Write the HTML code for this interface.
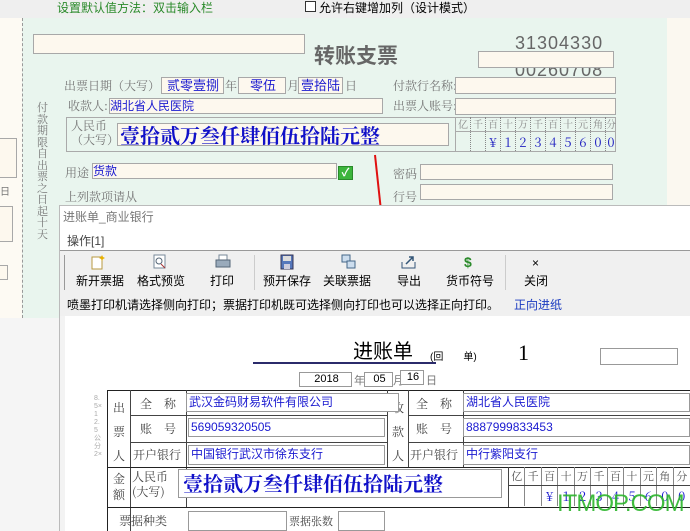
<!DOCTYPE html>
<html><head><meta charset="utf-8"><style>
*{margin:0;padding:0;box-sizing:border-box}
body{width:690px;height:531px;overflow:hidden;position:relative;background:#fff;font-family:"Liberation Sans","Noto Sans CJK SC",sans-serif;font-size:12px;color:#000}
.a{position:absolute;white-space:nowrap}
.bx{position:absolute;background:#fdf8ee;border:1px solid #a8a8a8}
.lb{position:absolute;white-space:nowrap;color:#777;font-family:"Noto Serif CJK SC",serif;font-size:12px;line-height:16px}
.bl{color:#1a1ad0}
.in{position:absolute;background:#fff;border:1px solid #999;font-size:12px;padding-left:2px;line-height:18px}
.g span{text-align:center;border-right:1px solid #888;display:block}
</style></head><body>
<div class="a" style="left:0;top:0;width:690px;height:18px;background:#efefef"></div>
<div class="a" style="left:57px;top:-1px;color:#2a8a2a;font-size:12px">设置默认值方法：双击输入栏</div>
<div class="a" style="left:305px;top:1px;width:11px;height:11px;border:1px solid #333;background:#fff"></div>
<div class="a" style="left:319px;top:-1px;font-size:12px">允许右键增加列（设计模式）</div>
<div class="a" style="left:0;top:18px;width:22px;height:300px;background:#fdfaf3"></div>
<div class="bx" style="left:-2px;top:138px;width:19px;height:40px"></div>
<div class="a" style="left:0;top:183px;color:#777;font-size:10px">日</div>
<div class="bx" style="left:-2px;top:206px;width:15px;height:36px"></div>
<div class="bx" style="left:-2px;top:265px;width:10px;height:15px"></div>
<div class="a" style="left:22px;top:18px;width:645px;height:300px;background:#e9f5ee;border-left:1px dashed #999"></div>
<div class="a" style="left:667px;top:18px;width:23px;height:190px;background:#fbf8f0"></div>
<div class="bx" style="left:33px;top:34px;width:272px;height:20px"></div>
<div class="a" style="left:314px;top:42px;font-size:21px;line-height:26px;color:#666;font-family:'Noto Sans CJK SC',sans-serif;font-weight:bold">转账支票</div>
<div class="a" style="left:515px;top:33px;font-size:18px;color:#666;letter-spacing:1px">31304330</div>
<div class="a" style="left:515px;top:60px;font-size:18px;color:#666;letter-spacing:1px">00260708</div>
<div class="bx" style="left:478px;top:51px;width:136px;height:17px"></div>
<div class="lb" style="left:64px;top:78px">出票日期（大写）</div>
<div class="bx bl" style="left:161px;top:77px;width:63px;height:17px;font-size:13px;padding-left:5px;line-height:15px">贰零壹捌</div>
<div class="lb" style="left:225px;top:78px">年</div>
<div class="bx bl" style="left:238px;top:77px;width:48px;height:17px;font-size:13px;padding-left:11px;line-height:15px">零伍</div>
<div class="lb" style="left:287px;top:78px">月</div>
<div class="bx bl" style="left:298px;top:77px;width:45px;height:17px;font-size:13px;padding-left:2px;line-height:15px">壹拾陆</div>
<div class="lb" style="left:345px;top:78px">日</div>
<div class="lb" style="left:393px;top:78px">付款行名称:</div>
<div class="bx" style="left:455px;top:77px;width:161px;height:17px"></div>
<div class="lb" style="left:68px;top:98px">收款人:</div>
<div class="bx bl" style="left:109px;top:98px;width:274px;height:16px;font-size:12px;line-height:14px">湖北省人民医院</div>
<div class="lb" style="left:393px;top:98px">出票人账号:</div>
<div class="bx" style="left:455px;top:98px;width:161px;height:17px"></div>
<div class="lb" style="left:37px;top:102px;width:12px;white-space:normal;line-height:11.5px;font-size:11px">付款期限自出票之日起十天</div>
<div class="a" style="left:66px;top:117px;width:550px;height:35px;border:1px solid #aaa"></div>
<div class="lb" style="left:71px;top:119px;font-size:12px;line-height:14px">人民币<br>（大写）</div>
<div class="bx" style="left:117px;top:123px;width:332px;height:23px;color:#1010c8;font-size:20px;font-weight:bold;font-family:'Noto Serif CJK SC',serif;line-height:21px;padding-left:2px;overflow:hidden">壹拾贰万叁仟肆佰伍拾陆元整</div>
<div class="a" style="left:455px;top:117px;width:161px;height:35px;border-left:1px solid #aaa;">
<div class="g" style="display:flex;height:15px;border-bottom:1px solid #aaa;color:#888;font-family:'Noto Serif CJK SC',serif;font-size:10px;line-height:14px">
<span style="width:15px;border-right-style:dotted">亿</span><span style="width:15px;border-right-style:dotted">千</span><span style="width:15px;border-right-style:dotted">百</span><span style="width:15px;border-right-style:dotted">十</span><span style="width:15px;border-right-style:dotted">万</span><span style="width:15px;border-right-style:dotted">千</span><span style="width:15px;border-right-style:dotted">百</span><span style="width:15px;border-right-style:dotted">十</span><span style="width:15px;border-right-style:dotted">元</span><span style="width:15px;border-right-style:dotted">角</span><span style="width:10px;border:none">分</span></div>
<div class="g" style="display:flex;height:19px;color:#2020c0;font-family:'Noto Serif CJK SC',serif;font-size:13px;line-height:19px">
<span style="width:15px;border-right-style:dotted"></span><span style="width:15px;border-right-style:dotted"></span><span style="width:15px;border-right-style:dotted">¥</span><span style="width:15px;border-right-style:dotted">1</span><span style="width:15px;border-right-style:dotted">2</span><span style="width:15px;border-right-style:dotted">3</span><span style="width:15px;border-right-style:dotted">4</span><span style="width:15px;border-right-style:dotted">5</span><span style="width:15px;border-right-style:dotted">6</span><span style="width:15px;border-right-style:dotted">0</span><span style="width:10px;border:none">0</span></div>
</div>
<div class="lb" style="left:65px;top:165px">用途</div>
<div class="bx bl" style="left:92px;top:163px;width:245px;height:16px;line-height:14px">货款</div>
<div class="a" style="left:338px;top:166px;width:15px;height:14px;background:#3cb53c;border:1px solid #2a8a2a;color:#fff;font-size:11px;line-height:12px;text-align:center;font-weight:bold">✓</div>
<div class="lb" style="left:393px;top:166px">密码</div>
<div class="bx" style="left:420px;top:164px;width:193px;height:16px"></div>
<div class="lb" style="left:65px;top:189px">上列款项请从</div>
<div class="lb" style="left:393px;top:189px">行号</div>
<div class="bx" style="left:420px;top:184px;width:193px;height:16px"></div>
<div class="a" style="left:0;top:318px;width:60px;height:213px;background:#f5f5f5"></div>
<svg class="a" style="left:370px;top:150px" width="30" height="95"><line x1="5" y1="5" x2="12" y2="70" stroke="#e01010" stroke-width="2"/><polygon points="7,68 18,67 14,88" fill="#e01010"/></svg>
<div class="a" style="left:59px;top:205px;width:631px;height:326px;background:#fff;border-left:1px solid #bbb;border-top:1px solid #bbb"></div>
<div class="a" style="left:63px;top:208px;color:#777;font-size:12px">进账单_商业银行</div>
<div class="a" style="left:67px;top:232px;color:#444;font-size:12px">操作[1]</div>
<div class="a" style="left:60px;top:250px;width:630px;height:43px;background:#f0f0f0;border-top:1px solid #999"></div>
<div class="a" style="left:64px;top:255px;width:1px;height:35px;background:#999"></div>
<div class="a" style="left:254px;top:255px;width:1px;height:35px;background:#ccc"></div>
<div class="a" style="left:505px;top:255px;width:1px;height:35px;background:#ccc"></div>
<div class="a" style="left:76px;top:272px">新开票据</div>
<div class="a" style="left:137px;top:272px">格式预览</div>
<div class="a" style="left:210px;top:272px">打印</div>
<div class="a" style="left:263px;top:272px">预开保存</div>
<div class="a" style="left:323px;top:272px">关联票据</div>
<div class="a" style="left:397px;top:272px">导出</div>
<div class="a" style="left:446px;top:272px">货币符号</div>
<div class="a" style="left:524px;top:272px">关闭</div>
<svg class="a" style="left:90px;top:254px" width="16" height="16"><rect x="2" y="3" width="10" height="12" fill="#fff" stroke="#b89a40"/><path d="M12 1l1 2 2 1-2 1-1 2-1-2-2-1 2-1z" fill="#e8b000"/></svg>
<svg class="a" style="left:152px;top:254px" width="16" height="16"><rect x="2" y="1" width="11" height="13" fill="#fff" stroke="#789"/><circle cx="7" cy="7" r="3" fill="none" stroke="#567"/><line x1="9" y1="10" x2="13" y2="14" stroke="#a33"/></svg>
<svg class="a" style="left:215px;top:254px" width="16" height="16"><rect x="4" y="1" width="8" height="6" fill="#fff" stroke="#789"/><rect x="1" y="6" width="14" height="7" fill="#9ab" stroke="#567"/></svg>
<svg class="a" style="left:279px;top:254px" width="16" height="16"><rect x="2" y="1" width="12" height="14" fill="#5577bb" stroke="#335"/><rect x="4" y="2" width="8" height="5" fill="#ddd"/><rect x="5" y="10" width="6" height="5" fill="#ccd"/></svg>
<svg class="a" style="left:341px;top:254px" width="16" height="16"><rect x="1" y="1" width="8" height="7" fill="#cde" stroke="#468"/><rect x="6" y="7" width="8" height="7" fill="#cde" stroke="#468"/></svg>
<svg class="a" style="left:401px;top:254px" width="16" height="16"><path d="M1 8v6h13V8" fill="none" stroke="#357"/><path d="M5 10L12 3M8 3h4v4" fill="none" stroke="#357" stroke-width="1.5"/></svg>
<div class="a" style="left:464px;top:254px;color:#2a8a2a;font-weight:bold;font-size:14px;line-height:16px">$</div>
<div class="a" style="left:532px;top:256px;font-size:12px;line-height:14px">×</div>
<div class="a" style="left:60px;top:293px;width:630px;height:23px;background:#f0f0f0"></div>
<div class="a" style="left:67px;top:296px">喷墨打印机请选择侧向打印；票据打印机既可选择侧向打印也可以选择正向打印。</div>
<div class="a" style="left:514px;top:296px;color:#1a3ac0">正向进纸</div>
<div class="a" style="left:60px;top:316px;width:630px;height:215px;background:#fff"></div>
<div class="a" style="left:60px;top:316px;width:5px;height:215px;background:#f3f3f3"></div>
<div class="a" style="left:353px;top:337px;font-size:20px;line-height:26px;font-family:'Noto Sans CJK SC',sans-serif">进账单</div>
<div class="a" style="left:430px;top:348px;font-size:10px">(回　　单)</div>
<div class="a" style="left:253px;top:362px;width:183px;height:2px;background:#2b2b6b"></div>
<div class="a" style="left:518px;top:340px;font-size:22px;font-family:'Liberation Serif',serif">1</div>
<div class="a" style="left:600px;top:348px;width:78px;height:17px;border:1px solid #999"></div>
<div class="in" style="left:299px;top:372px;width:53px;height:15px;line-height:13px;text-align:center;font-size:11px">2018</div>
<div class="a" style="left:354px;top:372px;font-size:11px;color:#777">年</div>
<div class="in" style="left:364px;top:372px;width:29px;height:15px;line-height:13px;text-align:center;font-size:11px">05</div>
<div class="a" style="left:393px;top:372px;font-size:11px;color:#777">月</div>
<div class="in" style="left:400px;top:370px;width:24px;height:15px;line-height:13px;text-align:center;font-size:11px">16</div>
<div class="a" style="left:426px;top:372px;font-size:11px;color:#777">日</div>
<div class="a" style="left:107px;top:390px;width:583px;height:141px;border:1px solid #222;border-right:none;border-bottom:none"></div>
<div class="a" style="left:130px;top:390px;width:1px;height:141px;background:#444"></div>
<div class="a" style="left:186px;top:390px;width:1px;height:117px;background:#444"></div>
<div class="a" style="left:387px;top:390px;width:1px;height:77px;background:#444"></div>
<div class="a" style="left:408px;top:390px;width:1px;height:77px;background:#444"></div>
<div class="a" style="left:463px;top:390px;width:1px;height:77px;background:#444"></div>
<div class="a" style="left:130px;top:415px;width:257px;height:1px;background:#444"></div>
<div class="a" style="left:408px;top:415px;width:282px;height:1px;background:#444"></div>
<div class="a" style="left:130px;top:442px;width:257px;height:1px;background:#444"></div>
<div class="a" style="left:408px;top:442px;width:282px;height:1px;background:#444"></div>
<div class="a" style="left:107px;top:467px;width:583px;height:1px;background:#222"></div>
<div class="a" style="left:107px;top:507px;width:583px;height:1px;background:#222"></div>
<div class="a" style="left:113px;top:396px;font-size:12px;line-height:24px;width:12px;white-space:normal;color:#444;font-family:'Noto Serif CJK SC',serif">出票人</div>
<div class="a" style="left:392px;top:396px;font-size:12px;line-height:24px;width:12px;white-space:normal;color:#444;font-family:'Noto Serif CJK SC',serif">收款人</div>
<div class="a" style="left:140px;top:395px;color:#444;font-family:'Noto Serif CJK SC',serif">全　称</div>
<div class="a" style="left:140px;top:420px;color:#444;font-family:'Noto Serif CJK SC',serif">账　号</div>
<div class="a" style="left:133px;top:446px;color:#444;font-family:'Noto Serif CJK SC',serif">开户银行</div>
<div class="a" style="left:416px;top:395px;color:#444;font-family:'Noto Serif CJK SC',serif">全　称</div>
<div class="a" style="left:416px;top:420px;color:#444;font-family:'Noto Serif CJK SC',serif">账　号</div>
<div class="a" style="left:410px;top:446px;color:#444;font-family:'Noto Serif CJK SC',serif">开户银行</div>
<div class="in bl" style="left:186px;top:393px;width:213px;height:19px;line-height:16px">武汉金码财易软件有限公司</div>
<div class="in bl" style="left:188px;top:418px;width:197px;height:19px;line-height:16px">569059320505</div>
<div class="in bl" style="left:188px;top:445px;width:197px;height:20px;line-height:17px">中国银行武汉市徐东支行</div>
<div class="in bl" style="left:463px;top:393px;width:227px;height:19px;line-height:16px">湖北省人民医院</div>
<div class="in bl" style="left:463px;top:418px;width:227px;height:19px;line-height:16px">8887999833453</div>
<div class="in bl" style="left:463px;top:445px;width:227px;height:20px;line-height:17px">中行紫阳支行</div>
<div class="a" style="left:113px;top:471px;font-size:12px;line-height:16px;width:12px;white-space:normal;color:#444;font-family:'Noto Serif CJK SC',serif">金额</div>
<div class="a" style="left:132px;top:469px;font-size:12px;line-height:15px;color:#444;font-family:'Noto Serif CJK SC',serif">人民币<br>(大写)</div>
<div class="in" style="left:178px;top:469px;width:324px;height:29px;color:#1010c8;font-size:20px;font-weight:bold;font-family:'Noto Serif CJK SC',serif;line-height:26px;padding-left:4px;overflow:hidden">壹拾贰万叁仟肆佰伍拾陆元整</div>
<div class="a" style="left:508px;top:467px;width:182px;height:40px;border-left:1px solid #444;font-size:11px;color:#555;font-family:'Noto Serif CJK SC',serif">
<div class="g" style="display:flex;height:19px;border-bottom:1px solid #444;line-height:18px"><span style="width:16.5px">亿</span><span style="width:16.5px">千</span><span style="width:16.5px">百</span><span style="width:16.5px">十</span><span style="width:16.5px">万</span><span style="width:16.5px">千</span><span style="width:16.5px">百</span><span style="width:16.5px">十</span><span style="width:16.5px">元</span><span style="width:16.5px">角</span><span style="width:16.5px;border:none">分</span></div>
<div class="g" style="display:flex;height:20px;color:#1a1ad0;font-size:13px;line-height:20px"><span style="width:16.5px"></span><span style="width:16.5px"></span><span style="width:16.5px">¥</span><span style="width:16.5px">1</span><span style="width:16.5px">2</span><span style="width:16.5px">3</span><span style="width:16.5px">4</span><span style="width:16.5px">5</span><span style="width:16.5px">6</span><span style="width:16.5px">0</span><span style="width:16.5px;border:none">0</span></div>
</div>
<div class="a" style="left:119px;top:512px;color:#444;font-family:'Noto Serif CJK SC',serif">票据种类</div>
<div class="a" style="left:188px;top:511px;width:99px;height:20px;border:1px solid #999"></div>
<div class="a" style="left:289px;top:513px;color:#444;font-size:11px;font-family:'Noto Serif CJK SC',serif">票据张数</div>
<div class="a" style="left:338px;top:511px;width:47px;height:20px;border:1px solid #999"></div>
<div class="a" style="left:94px;top:395px;width:8px;height:130px;font-size:7px;color:#aaa;white-space:normal;line-height:8px;word-break:break-all">8.5×12.5公分 2×</div>
<div class="a" style="left:557px;top:490px;color:#2bb52b;font-size:24px;letter-spacing:-1px;font-family:'Liberation Sans',sans-serif;opacity:.9">ITMOP.COM</div>
</body></html>
